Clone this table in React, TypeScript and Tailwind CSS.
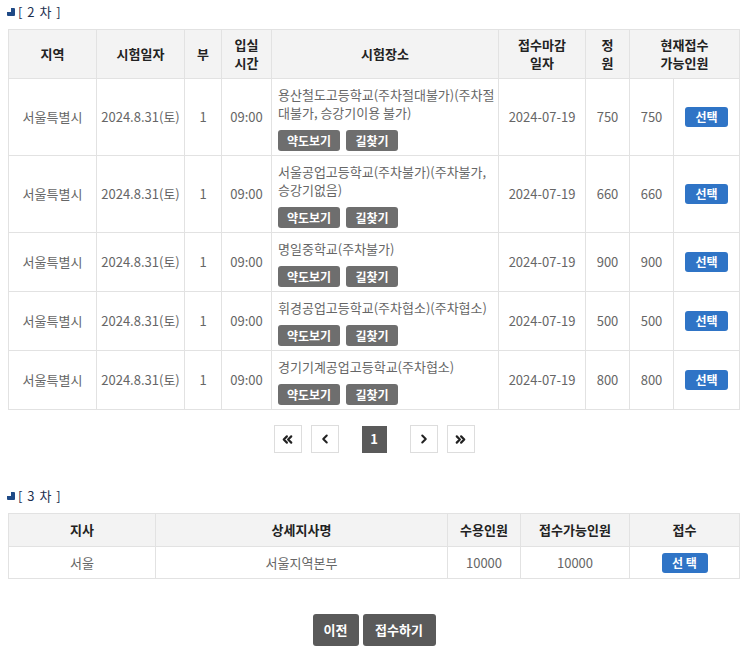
import { ChevronLeft, ChevronRight, ChevronsLeft, ChevronsRight } from "lucide-react";

const font = { fontFamily: '"Malgun Gothic", "Noto Sans CJK KR", "Noto Sans", sans-serif' };

const rows = [
  { place: "용산철도고등학교(주차절대불가)(주차절대불가, 승강기이용 불가)", cap: 750 },
  { place: "서울공업고등학교(주차불가)(주차불가, 승강기없음)", cap: 660 },
  { place: "명일중학교(주차불가)", cap: 900 },
  { place: "휘경공업고등학교(주차협소)(주차협소)", cap: 500 },
  { place: "경기기계공업고등학교(주차협소)", cap: 800 },
];

function SectionTitle({ label }: { label: string }) {
  return (
    <div className="flex h-[24px] items-center gap-[3px] pl-[7px] text-[13px] text-[#1d2f4f]">
      <span className="relative inline-block h-[8px] w-[8px] rounded-[1px] bg-[#1f4a86]">
        <span className="absolute left-0 top-0 h-[4px] w-[4px] bg-white" />
      </span>
      <span className="tracking-[1px]">{label}</span>
    </div>
  );
}

function GrayBtn({ children, w }: { children: string; w: string }) {
  return (
    <span className={`inline-flex h-[21px] items-center justify-center rounded-[3px] bg-[#6e6e6e] text-[12px] font-bold text-white ${w}`}>
      {children}
    </span>
  );
}

function PageBtn({ children }: { children: React.ReactNode }) {
  return (
    <span className="flex h-[28px] w-[28px] items-center justify-center border border-[#ddd] bg-white text-[#222]">
      {children}
    </span>
  );
}

const th = "border border-[#e2e2e2] bg-[#f3f3f3] text-center text-[13px] font-bold leading-[18px] text-[#222]";
const td = "border border-[#e2e2e2] text-center text-[13px] text-[#666]";

export default function App() {
  return (
    <div className="w-[743px] bg-white pt-0" style={font}>
      <SectionTitle label="[ 2 차 ]" />
      <div className="px-[8px] pt-[5px]">
        <table className="w-full table-fixed border-collapse">
          <colgroup>
            <col className="w-[88px]" />
            <col className="w-[88px]" />
            <col className="w-[37px]" />
            <col className="w-[50px]" />
            <col className="w-[227px]" />
            <col className="w-[87px]" />
            <col className="w-[44px]" />
            <col className="w-[44px]" />
            <col className="w-[66px]" />
          </colgroup>
          <thead>
            <tr className="h-[49px]">
              <th className={th}>지역</th>
              <th className={th}>시험일자</th>
              <th className={th}>부</th>
              <th className={th}>입실<br />시간</th>
              <th className={th}>시험장소</th>
              <th className={th}>접수마감<br />일자</th>
              <th className={th}>정<br />원</th>
              <th className={th} colSpan={2}>현재접수<br />가능인원</th>
            </tr>
          </thead>
          <tbody>
            {rows.map((r) => (
              <tr key={r.place}>
                <td className={td}>서울특별시</td>
                <td className={td}>2024.8.31(토)</td>
                <td className={td}>1</td>
                <td className={td}>09:00</td>
                <td className="border border-[#e2e2e2] pb-[4px] pl-[6px] pr-[1px] pt-[7px] text-left text-[13px] text-[#666]">
                  <div className="break-all leading-[18px]">{r.place}</div>
                  <div className="mt-[8px] flex gap-[6px]">
                    <GrayBtn w="w-[62px]">약도보기</GrayBtn>
                    <GrayBtn w="w-[52px]">길찾기</GrayBtn>
                  </div>
                </td>
                <td className={td}>2024-07-19</td>
                <td className={td}>{r.cap}</td>
                <td className={td}>{r.cap}</td>
                <td className={td}>
                  <span className="inline-flex h-[20px] w-[43px] items-center justify-center rounded-[3px] bg-[#2f74c6] text-[12px] font-bold text-white">
                    선택
                  </span>
                </td>
              </tr>
            ))}
          </tbody>
        </table>
      </div>

      <div className="flex items-center justify-center pl-[13px] pr-[8px] pt-[15px]">
        <PageBtn><ChevronsLeft size={15} strokeWidth={3.5} /></PageBtn>
        <span className="w-[9px]" />
        <PageBtn><ChevronLeft size={14} strokeWidth={3.5} /></PageBtn>
        <span className="w-[23px]" />
        <span className="flex h-[27px] w-[25px] items-center justify-center bg-[#5a5a5a] text-[13px] font-bold text-white">1</span>
        <span className="w-[23px]" />
        <PageBtn><ChevronRight size={14} strokeWidth={3.5} /></PageBtn>
        <span className="w-[9px]" />
        <PageBtn><ChevronsRight size={15} strokeWidth={3.5} /></PageBtn>
      </div>

      <div className="pt-[31px]">
        <SectionTitle label="[ 3 차 ]" />
      </div>
      <div className="px-[8px] pt-[5px]">
        <table className="w-full table-fixed border-collapse">
          <colgroup>
            <col className="w-[147px]" />
            <col className="w-[292px]" />
            <col className="w-[73px]" />
            <col className="w-[109px]" />
            <col className="w-[110px]" />
          </colgroup>
          <thead>
            <tr className="h-[33px]">
              <th className={th}>지사</th>
              <th className={th}>상세지사명</th>
              <th className={th}>수용인원</th>
              <th className={th}>접수가능인원</th>
              <th className={th}>접수</th>
            </tr>
          </thead>
          <tbody>
            <tr className="h-[32px]">
              <td className={td}>서울</td>
              <td className={td}>서울지역본부</td>
              <td className={td}>10000</td>
              <td className={td}>10000</td>
              <td className={td}>
                <span className="inline-flex h-[20px] w-[46px] items-center justify-center rounded-[3px] bg-[#2f74c6] text-[12px] font-bold text-white">
                  선 택
                </span>
              </td>
            </tr>
          </tbody>
        </table>
      </div>

      <div className="flex justify-center gap-[4px] pb-[2px] pl-[13px] pr-[8px] pt-[35px]">
        <span className="flex h-[32px] w-[46px] items-center justify-center rounded-[3px] bg-[#5a5a5a] text-[13px] font-bold text-white">이전</span>
        <span className="flex h-[32px] w-[73px] items-center justify-center rounded-[3px] bg-[#5a5a5a] text-[13px] font-bold text-white">접수하기</span>
      </div>
    </div>
  );
}
